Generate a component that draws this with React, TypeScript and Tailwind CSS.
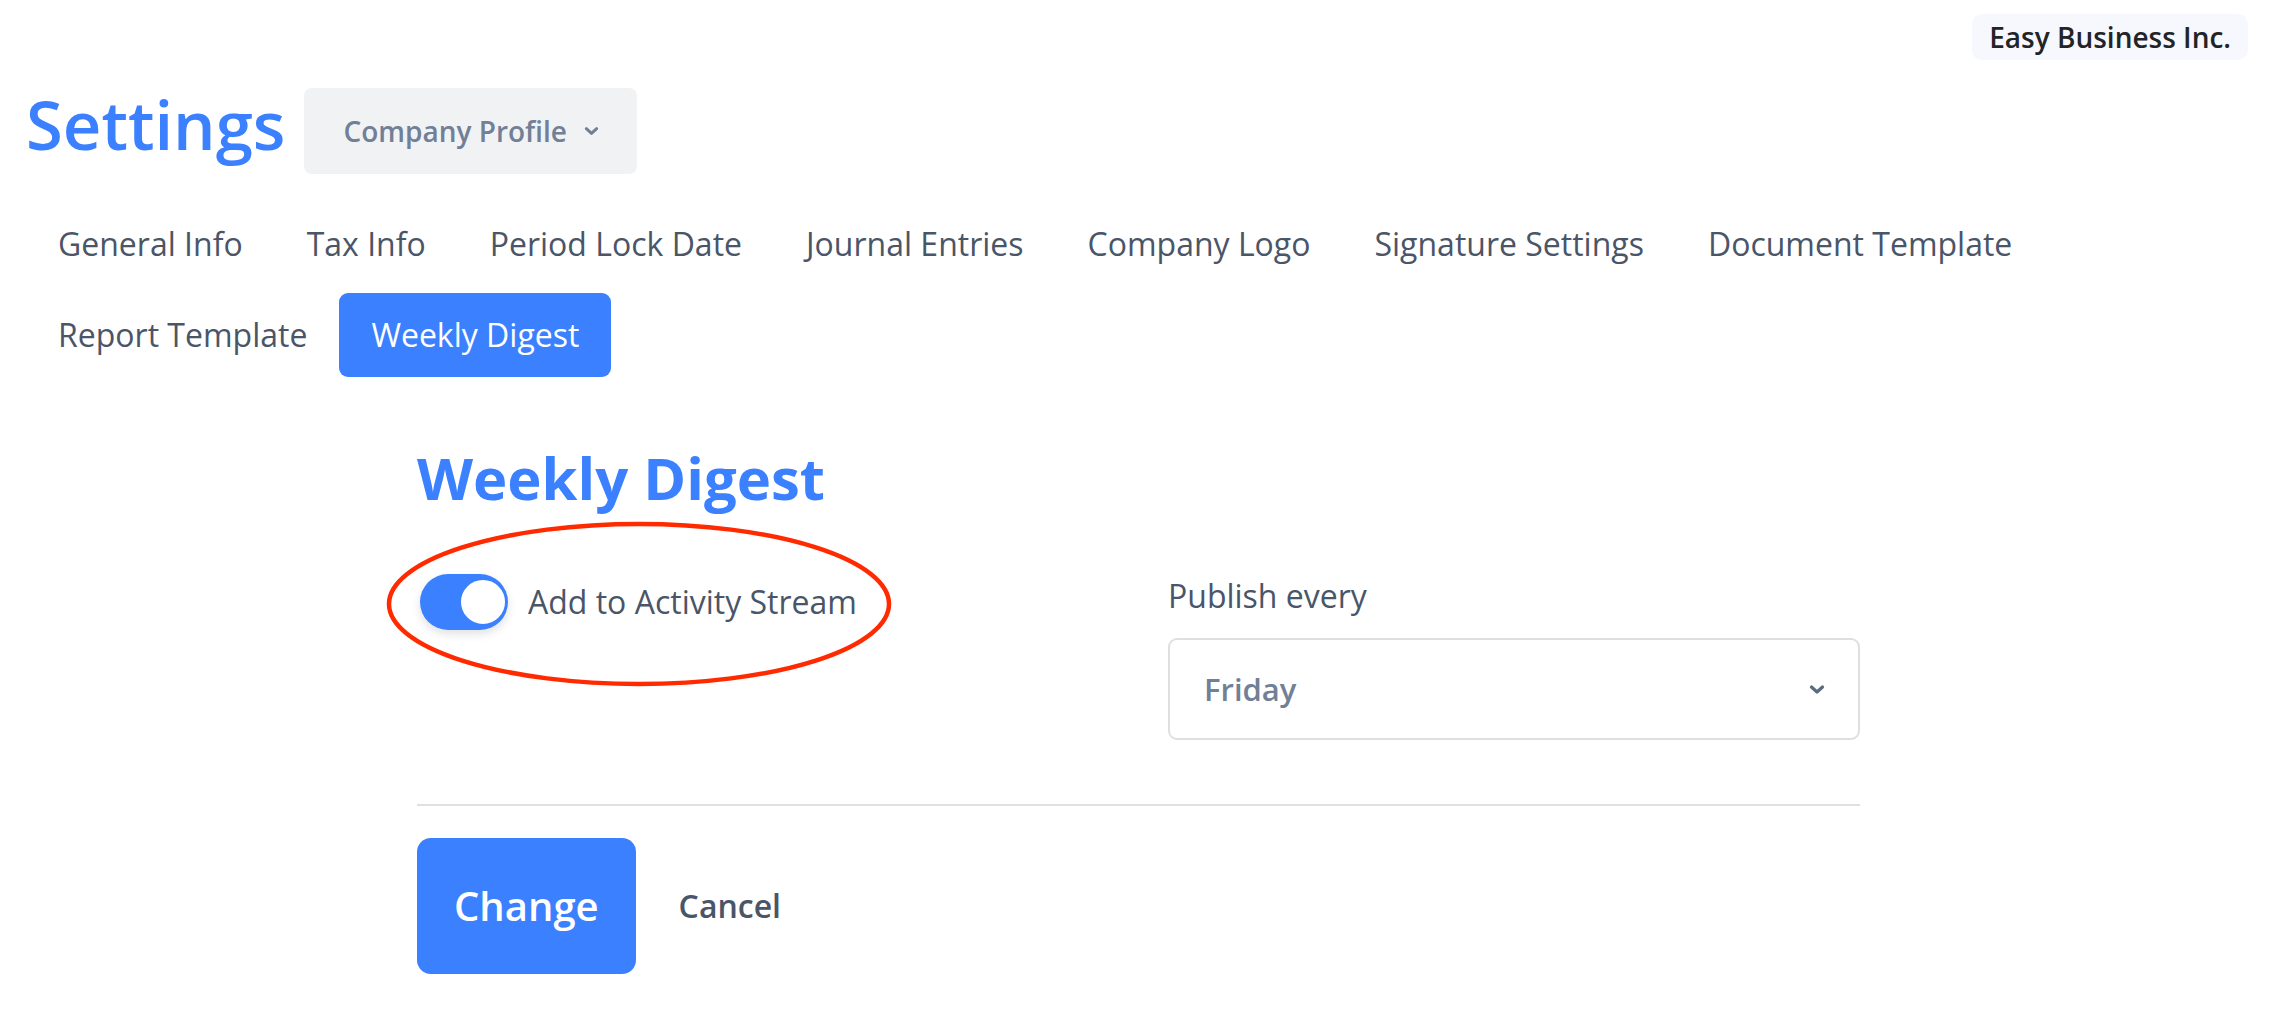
import { useState } from "react"

const tabs = [
  "General Info",
  "Tax Info",
  "Period Lock Date",
  "Journal Entries",
  "Company Logo",
  "Signature Settings",
  "Document Template",
  "Report Template",
  "Weekly Digest",
]

function Chevron({ className }: { className?: string }) {
  return (
    <svg viewBox="0 0 16 10" className={className} fill="none" stroke="currentColor" strokeWidth={3.2} strokeLinecap="round" strokeLinejoin="round">
      <polyline points="2.5,2.5 8,7.5 13.5,2.5" />
    </svg>
  )
}

export default function App() {
  const [active, setActive] = useState("Weekly Digest")
  const [stream, setStream] = useState(true)

  return (
    <div className="relative min-h-screen bg-white font-['Open_Sans',sans-serif] text-[#4a5568]">
      {/* empresa */}
      <div className="flex justify-end pt-[14px] pr-[48px]">
        <div className="h-[46px] flex items-center px-[17px] rounded-[10px] bg-[#f7f8fd] text-[28px] font-semibold text-[#222428]">
          Easy Business Inc.
        </div>
      </div>

      {/* header */}
      <div className="mt-[28px] pl-[26px] flex items-start">
        <h1 className="mt-[3px] text-[67px] leading-[67px] font-semibold text-[#3b80ff]">Settings</h1>
        <button className="ml-[19px] h-[86px] flex items-center gap-[17px] pl-[39px] pr-[38px] rounded-[8px] bg-[#f1f2f4] text-[28px] font-semibold text-[#718096]">
          Company Profile
          <Chevron className="w-[15px] h-[10px]" />
        </button>
      </div>

      {/* tabs */}
      <div className="mt-[28px] pl-[26px] pr-[26px] flex flex-wrap gap-y-[7px]">
        {tabs.map(t => (
          <button
            key={t}
            onClick={() => setActive(t)}
            className={
              t === active
                ? "h-[84px] px-[32px] flex items-center rounded-[9px] bg-[#3b80ff] text-white text-[32px]"
                : "h-[84px] px-[32px] flex items-center text-[#4a5568] text-[32px]"
            }
          >
            {t}
          </button>
        ))}
      </div>

      {/* formulario */}
      <div className="ml-[417px] w-[1443px] mt-[72px]">
        <h2 className="text-[58px] leading-[58px] font-bold text-[#3b80ff]">Weekly Digest</h2>

        <div className="mt-[67px] grid grid-cols-[1fr_692px]">
          <div className="flex items-center h-[56px] gap-[20px] pl-[3px]">
            <button
              onClick={() => setStream(s => !s)}
              className={`relative w-[88px] h-[56px] rounded-full shadow-[0_4px_10px_rgba(0,0,0,0.12)] ${stream ? "bg-[#3b80ff]" : "bg-[#cbd5e0]"}`}
            >
              <span
                className={`absolute top-[4px] w-[48px] h-[48px] rounded-full bg-white border-2 ${stream ? "right-[1px] border-[#3b80ff]" : "left-[1px] border-[#cbd5e0]"}`}
              />
            </button>
            <span className="text-[32px] leading-[56px]">Add to Activity Stream</span>
          </div>

          <div>
            <label className="block text-[32px] leading-[44px]">Publish every</label>
            <div className="mt-[20px] h-[102px] flex items-center justify-between pl-[34px] pr-[33px] border-2 border-[#dfdfdf] rounded-[9px]">
              <span className="text-[31px] font-semibold text-[#718096]">Friday</span>
              <Chevron className="w-[16px] h-[11px] text-[#5a6a80]" />
            </div>
          </div>
        </div>

        <div className="mt-[64px] h-[2px] bg-[#e0e0e0]" />

        <div className="mt-[32px] flex items-center gap-[43px]">
          <button className="h-[136px] px-[37px] rounded-[14px] bg-[#3b80ff] text-white text-[40px] font-semibold">
            Change
          </button>
          <button className="text-[32px] font-semibold text-[#4a5568]">Cancel</button>
        </div>
      </div>

      {/* anotación */}
      <svg className="absolute left-[384px] top-[520px] pointer-events-none" width="512" height="170" viewBox="0 0 512 170">
        <ellipse cx="255" cy="84" rx="250" ry="80" fill="none" stroke="#ff2a00" strokeWidth="4.5" />
      </svg>
    </div>
  )
}
